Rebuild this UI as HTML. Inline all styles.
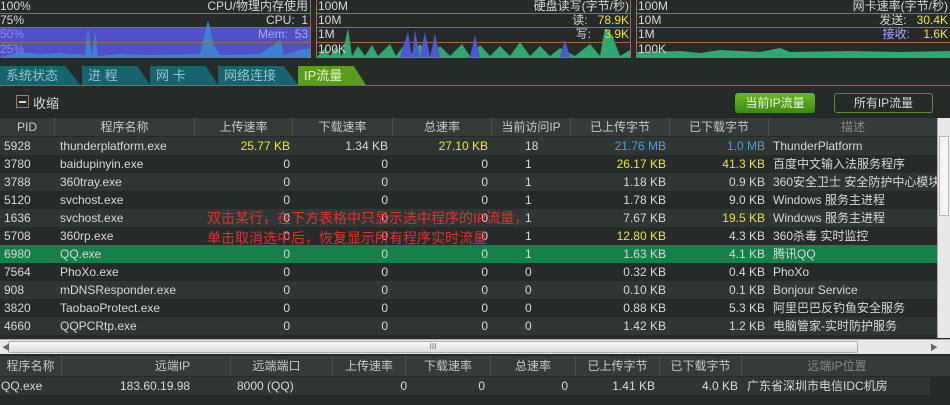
<!DOCTYPE html>
<html><head><meta charset="utf-8"><style>
*{margin:0;padding:0;box-sizing:border-box}
body{width:950px;height:405px;background:#262b29;font-family:"Liberation Sans","Noto Sans CJK SC",sans-serif;font-size:12px;color:#d8d8d8;position:relative;overflow:hidden}
.a{position:absolute;white-space:nowrap}
.tab{position:absolute;top:66px;height:19px;background:#16646e;color:#8fc4cc;font-size:13px;padding-left:6px;line-height:19px;clip-path:polygon(0 0,82% 0,100% 100%,0 100%)}
.row{position:absolute;left:0;width:937px;height:18px;line-height:18px;font-size:12px}
.row>span{position:absolute;top:0;white-space:nowrap}
.r{text-align:right}
.y{color:#e8e830}.b{color:#3aa6dc}
.hd{position:absolute;height:18px;line-height:18px;color:#c8c8c8;text-align:center;border-right:1px solid #4a504d;top:0}
</style></head><body>
<svg class="a" style="left:0;top:0" width="950" height="58">
<rect x="0" y="27" width="310" height="30" fill="#5050c8"/>
<polygon points="0,57 20,52 40,54 60,53 85,55 88,28 92,55 95,30 98,56 120,54 150,55 200,54 208,20 214,45 220,55 260,54 280,40 284,55 300,50 310,48 310,57" fill="#3d7fd0"/>
<g stroke="#a06850" stroke-width="1" fill="none">
<line x1="0" y1="13.5" x2="310" y2="13.5"/><line x1="0" y1="27.5" x2="310" y2="27.5"/><line x1="0" y1="42.5" x2="310" y2="42.5"/><line x1="310.5" y1="0" x2="310.5" y2="58"/><line x1="0" y1="57.5" x2="311" y2="57.5"/>
<line x1="316.5" y1="0" x2="316.5" y2="58"/><line x1="316" y1="13.5" x2="630" y2="13.5"/><line x1="316" y1="27.5" x2="630" y2="27.5"/><line x1="316" y1="42.5" x2="630" y2="42.5"/><line x1="630.5" y1="0" x2="630.5" y2="58"/><line x1="316" y1="57.5" x2="631" y2="57.5"/>
<line x1="636.5" y1="0" x2="636.5" y2="58"/><line x1="636" y1="13.5" x2="950" y2="13.5"/><line x1="636" y1="27.5" x2="950" y2="27.5"/><line x1="636" y1="42.5" x2="950" y2="42.5"/><line x1="636" y1="57.5" x2="950" y2="57.5"/>
</g>
<polygon points="317,57 325,48 330,56 336,46 342,56 348,28 352,56 358,46 365,56 372,45 378,56 390,44 396,56 404,45 410,56 420,44 430,56 440,46 450,56 462,44 470,56 480,45 490,56 500,46 510,56 520,42 530,56 540,46 550,56 560,48 575,56 590,44 600,56 605,28 612,35 620,56 630,50 630,57" fill="#2ea870"/>
<polygon points="400,57 408,32 412,57 415,30 420,57 425,32 430,57 435,34 440,57 470,57 475,35 480,57 560,57 565,40 570,57" fill="#4a5ad0"/>
<polygon points="637,57 637,52 680,51 700,53 720,50 760,52 780,48 790,52 850,51 900,52 950,51 950,57" fill="#2ea870"/>
</svg>
<div class="a" style="left:0;top:0;line-height:13px">100%</div>
<div class="a" style="left:0;top:14px;line-height:13px">75%</div>
<div class="a" style="left:0;top:28px;line-height:13px;color:#8c8cf0">50%</div>
<div class="a" style="left:0;top:43px;line-height:13px;color:#8c8cf0">25%</div>
<div class="a" style="right:642px;top:0;line-height:13px">CPU/物理内存使用</div>
<div class="a" style="right:642px;top:14px;line-height:13px">CPU:&nbsp;&nbsp;1</div>
<div class="a" style="right:642px;top:28px;line-height:13px;color:#a8a8f8">Mem:&nbsp;&nbsp;53</div>
<div class="a" style="left:318px;top:0;line-height:13px">100M</div>
<div class="a" style="left:318px;top:14px;line-height:13px">10M</div>
<div class="a" style="left:318px;top:28px;line-height:13px">1M</div>
<div class="a" style="left:318px;top:43px;line-height:13px">100K</div>
<div class="a" style="right:321px;top:0;line-height:13px">硬盘读写(字节/秒)</div>
<div class="a" style="right:321px;top:14px;line-height:13px">读:&nbsp;&nbsp;&nbsp;<span class="y">78.9K</span></div>
<div class="a" style="right:321px;top:28px;line-height:13px">写:&nbsp;&nbsp;&nbsp;&nbsp;<span class="y">3.9K</span></div>
<div class="a" style="left:638px;top:0;line-height:13px">100M</div>
<div class="a" style="left:638px;top:14px;line-height:13px">10M</div>
<div class="a" style="left:638px;top:28px;line-height:13px">1M</div>
<div class="a" style="left:638px;top:43px;line-height:13px">100K</div>
<div class="a" style="right:2px;top:0;line-height:13px">网卡速率(字节/秒)</div>
<div class="a" style="right:2px;top:14px;line-height:13px">发送:&nbsp;&nbsp;&nbsp;<span class="y">30.4K</span></div>
<div class="a" style="right:2px;top:28px;line-height:13px"><span style="color:#a8a8f8">接收:</span>&nbsp;&nbsp;&nbsp;&nbsp;<span class="y">1.6K</span></div>
<div class="tab" style="left:0;width:80px">系统状态</div>
<div class="tab" style="left:82px;width:68px">进 程</div>
<div class="tab" style="left:150px;width:68px">网 卡</div>
<div class="tab" style="left:218px;width:80px">网络连接</div>
<div class="tab" style="left:298px;width:68px;background:#5a9c1c;color:#e8f8d0">IP流量</div>
<div class="a" style="left:0;top:85px;width:950px;height:1px;background:#5a8a2a"></div>
<div class="a" style="left:16px;top:95px;width:13px;height:13px;border:1px solid #c07050"><div style="margin:5px 2px;height:2px;background:#ddd"></div></div>
<div class="a" style="left:33px;top:93px;font-size:13px">收缩</div>
<div class="a" style="left:735px;top:93px;width:80px;height:20px;background:linear-gradient(#6ab828,#3a8a10);border-radius:3px;text-align:center;line-height:20px;color:#f0f0f0">当前IP流量</div>
<div class="a" style="left:834px;top:93px;width:99px;height:20px;border:1px solid #5a8a3a;border-radius:3px;text-align:center;line-height:18px">所有IP流量</div>
<div class="a" style="left:0;top:118px;width:937px;height:18px;background:#353b38">
<div class="hd" style="left:0;width:55px">PID</div>
<div class="hd" style="left:55px;width:140px">程序名称</div>
<div class="hd" style="left:195px;width:98px">上传速率</div>
<div class="hd" style="left:293px;width:100px">下载速率</div>
<div class="hd" style="left:393px;width:99px">总速率</div>
<div class="hd" style="left:492px;width:79px">当前访问IP</div>
<div class="hd" style="left:571px;width:99px">已上传字节</div>
<div class="hd" style="left:670px;width:99px">已下载字节</div>
<div class="hd" style="left:769px;width:168px;color:#888;border:none">描述</div>
</div>
<div class="a" style="left:937px;top:118px;width:13px;height:220px;background:#e8e8e8;border-left:1px solid #aaa"><div style="margin:18px 1px;height:80px;background:#f4f4f4;border:1px solid #bbb"></div></div>
<div id="rows"></div>
<script>
var d=[
["5928","thunderplatform.exe","<span class=y>25.77 KB</span>","1.34 KB","<span class=y>27.10 KB</span>","18","<span class=b>21.76 MB</span>","<span class=b>1.0 MB</span>","ThunderPlatform"],
["3780","baidupinyin.exe","0","0","0","1","<span class=y>26.17 KB</span>","<span class=y>41.3 KB</span>","百度中文输入法服务程序"],
["3788","360tray.exe","0","0","0","1","1.18 KB","0.9 KB","360安全卫士 安全防护中心模块"],
["5120","svchost.exe","0","0","0","1","1.78 KB","9.0 KB","Windows 服务主进程"],
["1636","svchost.exe","0","0","0","1","7.67 KB","<span class=y>19.5 KB</span>","Windows 服务主进程"],
["5708","360rp.exe","0","0","0","1","<span class=y>12.80 KB</span>","4.3 KB","360杀毒 实时监控"],
["6980","QQ.exe","0","0","0","1","1.63 KB","4.1 KB","腾讯QQ"],
["7564","PhoXo.exe","0","0","0","0","0.32 KB","0.4 KB","PhoXo"],
["908","mDNSResponder.exe","0","0","0","0","0.10 KB","0.1 KB","Bonjour Service"],
["3820","TaobaoProtect.exe","0","0","0","0","0.88 KB","5.3 KB","阿里巴巴反钓鱼安全服务"],
["4660","QQPCRtp.exe","0","0","0","0","1.42 KB","1.2 KB","电脑管家-实时防护服务"],
["","","","","","","","",""]];
var h="";
d.forEach(function(r,i){
var bg=i==6?"#17804a":(i%2?"#262b29":"#303633");
var top=137+i*18;var hh=i==11?3:18;
h+='<div class="row" style="top:'+top+'px;height:'+hh+'px;overflow:hidden;background:'+bg+'">'+
'<span style="left:4px">'+r[0]+'</span><span style="left:60px">'+r[1]+'</span>'+
'<span class=r style="left:195px;width:95px">'+r[2]+'</span><span class=r style="left:293px;width:95px">'+r[3]+'</span>'+
'<span class=r style="left:393px;width:95px">'+r[4]+'</span><span style="left:525px">'+r[5]+'</span>'+
'<span class=r style="left:571px;width:95px">'+r[6]+'</span><span class=r style="left:670px;width:95px">'+r[7]+'</span>'+
'<span style="left:773px;width:164px;overflow:hidden">'+r[8]+'</span></div>';});
document.getElementById("rows").innerHTML=h;
</script>
<div class="a" style="left:207px;top:208px;color:#e03030;font-size:14px;line-height:20px">双击某行，在下方表格中只显示选中程序的IP流量，<br>单击取消选中后，恢复显示所有程序实时流量</div>
<div class="a" style="left:0;top:339px;width:950px;height:15px;background:#e8e8e8;border-top:1px solid #aaa">
<div style="position:absolute;left:8px;top:1px;width:850px;height:12px;background:linear-gradient(#fafafa,#dcdcdc);border:1px solid #aaa;border-radius:2px;text-align:center;font-size:8px;line-height:10px;color:#666">III</div>
<div style="position:absolute;left:2px;top:2px;font-size:8px;color:#666">◀</div>
<div style="position:absolute;right:12px;top:2px;font-size:8px;color:#666">▶</div>
</div>
<div class="a" style="left:0;top:356px;width:950px;height:20px;background:#353b38;line-height:20px;color:#aaa">
<div class="hd" style="left:0;width:62px;height:20px;line-height:20px">程序名称</div>
<div class="hd" style="left:115px;width:116px;height:20px;line-height:20px">远端IP</div>
<div class="hd" style="left:221px;width:112px;height:20px;line-height:20px">远端端口</div>
<div class="hd" style="left:333px;width:73px;height:20px;line-height:20px">上传速率</div>
<div class="hd" style="left:406px;width:85px;height:20px;line-height:20px">下载速率</div>
<div class="hd" style="left:491px;width:85px;height:20px;line-height:20px">总速率</div>
<div class="hd" style="left:576px;width:84px;height:20px;line-height:20px">已上传字节</div>
<div class="hd" style="left:660px;width:82px;height:20px;line-height:20px">已下载字节</div>
<div class="hd" style="left:742px;width:190px;height:20px;line-height:20px;border:none;color:#888">远端IP位置</div>
</div>
<div class="row" style="top:377px;width:930px;background:#303633">
<span style="left:1px">QQ.exe</span><span style="left:120px">183.60.19.98</span><span style="left:237px">8000 (QQ)</span>
<span class=r style="left:333px;width:74px">0</span><span class=r style="left:406px;width:79px">0</span><span class=r style="left:491px;width:77px">0</span>
<span class=r style="left:576px;width:79px">1.41 KB</span><span class=r style="left:660px;width:78px">4.0 KB</span><span style="left:747px">广东省深圳市电信IDC机房</span>
</div>
</body></html>
